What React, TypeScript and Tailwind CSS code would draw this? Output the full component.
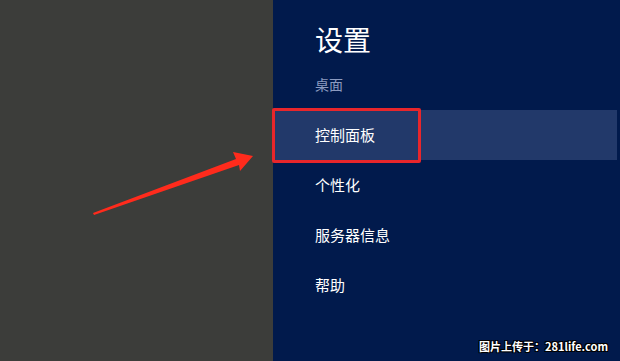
import React from "react";

const cjk = { fontFamily: '"Noto Sans CJK SC", "Noto Sans", sans-serif' };

export default function App() {
  const items = ["控制面板", "个性化", "服务器信息", "帮助"];
  return (
    <div className="flex h-[361px] w-[620px] overflow-hidden" style={cjk}>
      <div className="relative w-[273px] shrink-0 bg-[#3c3d3a]">
        <svg className="absolute left-0 top-0" width="273" height="361" viewBox="0 0 273 361">
          <polygon points="93,213 94,215 239,165 240,171 253,156 233,152 236,159" fill="#ff2b1c" />
        </svg>
      </div>
      <div className="relative flex flex-1 flex-col bg-[#011a4c]">
        <div className="pl-[42px] pt-[22px] text-[28px] leading-[34px] text-white">设置</div>
        <div className="pl-[42px] pt-[19px] text-[14px] leading-[18px] text-[#8c9bc0]">桌面</div>
        <div className="mt-[17px] flex flex-col">
          {items.map((t, i) => (
            <div
              key={t}
              className={
                "relative flex h-[50px] items-center pl-[42px] text-[15px] text-white " +
                (i === 0 ? "mr-[3px] bg-[#22396a]" : "")
              }
            >
              {i === 0 && (
                <div className="absolute -left-px -top-[2px] h-[55px] w-[149px] rounded-[2px] border-[3px] border-[#e8262b]" />
              )}
              <span className="relative">{t}</span>
            </div>
          ))}
        </div>
        <div
          className="absolute bottom-[8px] right-[12px] text-[11px] font-bold leading-[14px] text-white"
          style={{ textShadow: "1px 1px 0 #000, -1px -1px 0 #000, 1px -1px 0 #000, -1px 1px 0 #000" }}
        >
          图片上传于：281life.com
        </div>
      </div>
    </div>
  );
}
